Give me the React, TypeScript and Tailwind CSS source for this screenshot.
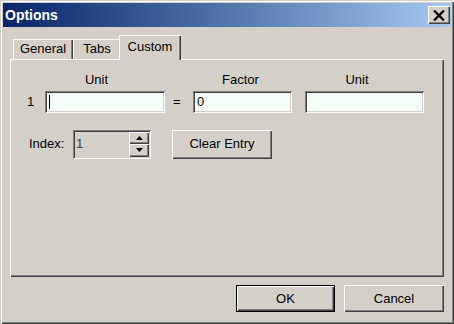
const raised =
  "shadow-[inset_1px_1px_#ffffff,inset_-1px_-1px_#404040,inset_-2px_-2px_#808080]";
const sunken =
  "shadow-[inset_1px_1px_#808080,inset_-1px_-1px_#ffffff,inset_2px_2px_#404040,inset_-2px_-2px_#d4d0c8]";

function TextBox({ width, children }: { width: string; children?: React.ReactNode }) {
  return (
    <div className={`${width} h-[22px] bg-[#f5fdf8] ${sunken} flex items-center pl-[4px]`}>
      {children}
    </div>
  );
}

function Arrow({ up }: { up?: boolean }) {
  return (
    <svg width="7" height="4" viewBox="0 0 7 4">
      {up ? (
        <path d="M3.5 0 L7 4 L0 4 Z" fill="#000" />
      ) : (
        <path d="M0 0 L7 0 L3.5 4 Z" fill="#000" />
      )}
    </svg>
  );
}

export default function App() {
  return (
    <div
      className="w-[454px] h-[324px] bg-[#d4d0c8] p-[3px] flex flex-col text-[13px] text-black shadow-[inset_1px_1px_#d4d0c8,inset_2px_2px_#ffffff,inset_-1px_-1px_#404040,inset_-2px_-2px_#808080]"
      style={{ fontFamily: '"Liberation Sans", Arial, sans-serif' }}
    >
      {/* title bar */}
      <div className="h-[24px] flex items-center justify-between bg-gradient-to-r from-[#0a246a] to-[#a6caf0] pl-[2px]">
        <span className="text-white font-bold text-[14px] leading-none">Options</span>
        <div className={`w-[22px] h-[18px] mr-[1px] bg-[#d4d0c8] ${raised} flex items-center justify-center`}>
          <svg width="12" height="11" viewBox="0 0 12 11">
            <path d="M1 0.5 L11 10.5 M11 0.5 L1 10.5" stroke="#000" strokeWidth="2.3" />
          </svg>
        </div>
      </div>

      <div className="flex-1 flex flex-col px-[7px] pt-[8px] pb-[9px]">
        {/* tabs */}
        <div className="h-[24px] flex items-end pl-[3px]">
          <div className="w-[60px] h-[20px] flex items-center justify-center shadow-[inset_1px_1px_#ffffff,inset_-1px_0_#404040,inset_-2px_0_#808080]">
            General
          </div>
          <div className="w-[48px] h-[20px] flex items-center justify-center shadow-[inset_1px_1px_#ffffff,inset_-1px_0_#404040,inset_-2px_0_#808080]">
            Tabs
          </div>
          <div className="relative z-10 -ml-[2px] -mb-[1px] w-[62px] h-[25px] bg-[#d4d0c8] flex items-center justify-center pb-[1px] shadow-[inset_1px_1px_#ffffff,inset_-1px_0_#404040,inset_-2px_0_#808080]">
            Custom
          </div>
        </div>

        {/* panel */}
        <div className="h-[218px] p-[1px] shadow-[inset_1px_1px_#ffffff,inset_-1px_-1px_#404040,inset_-2px_-2px_#808080]">
          <div className="flex h-[16px] mt-[12px] leading-[16px]">
            <div className="ml-[34px] w-[103px] text-center">Unit</div>
            <div className="ml-[45px] w-[95px] text-center">Factor</div>
            <div className="ml-[17px] w-[104px] text-center">Unit</div>
          </div>

          <div className="flex items-center mt-[3px]">
            <div className="w-[34px] pl-[16px]">1</div>
            <TextBox width="w-[120px]">
              <div className="w-[1px] h-[14px] bg-black" />
            </TextBox>
            <div className="w-[28px] pl-[8px]">=</div>
            <TextBox width="w-[99px]">0</TextBox>
            <div className="w-[13px]" />
            <TextBox width="w-[119px]" />
          </div>

          <div className="flex items-center h-[30px] mt-[16px]">
            <div className="w-[62px] pl-[18px]">Index:</div>
            <div className={`w-[78px] h-[29px] ${sunken} flex items-center justify-between pl-[3px] pr-[2px]`}>
              <span className="text-[#404040]">1</span>
              <div className="flex flex-col">
                <div className={`w-[20px] h-[12px] bg-[#d4d0c8] ${raised} flex items-center justify-center`}>
                  <Arrow up />
                </div>
                <div className={`w-[20px] h-[13px] bg-[#d4d0c8] ${raised} flex items-center justify-center`}>
                  <Arrow />
                </div>
              </div>
            </div>
            <button className={`ml-[21px] w-[100px] h-[29px] ${raised} flex items-center justify-center`}>
              Clear Entry
            </button>
          </div>
        </div>

        {/* dialog buttons */}
        <div className="flex justify-end gap-[9px] mt-[8px]">
          <button className="w-[99px] h-[27px] border border-black">
            <div className={`w-full h-full ${raised} flex items-center justify-center`}>OK</div>
          </button>
          <button className={`w-[100px] h-[27px] ${raised} flex items-center justify-center`}>
            Cancel
          </button>
        </div>
      </div>
    </div>
  );
}
